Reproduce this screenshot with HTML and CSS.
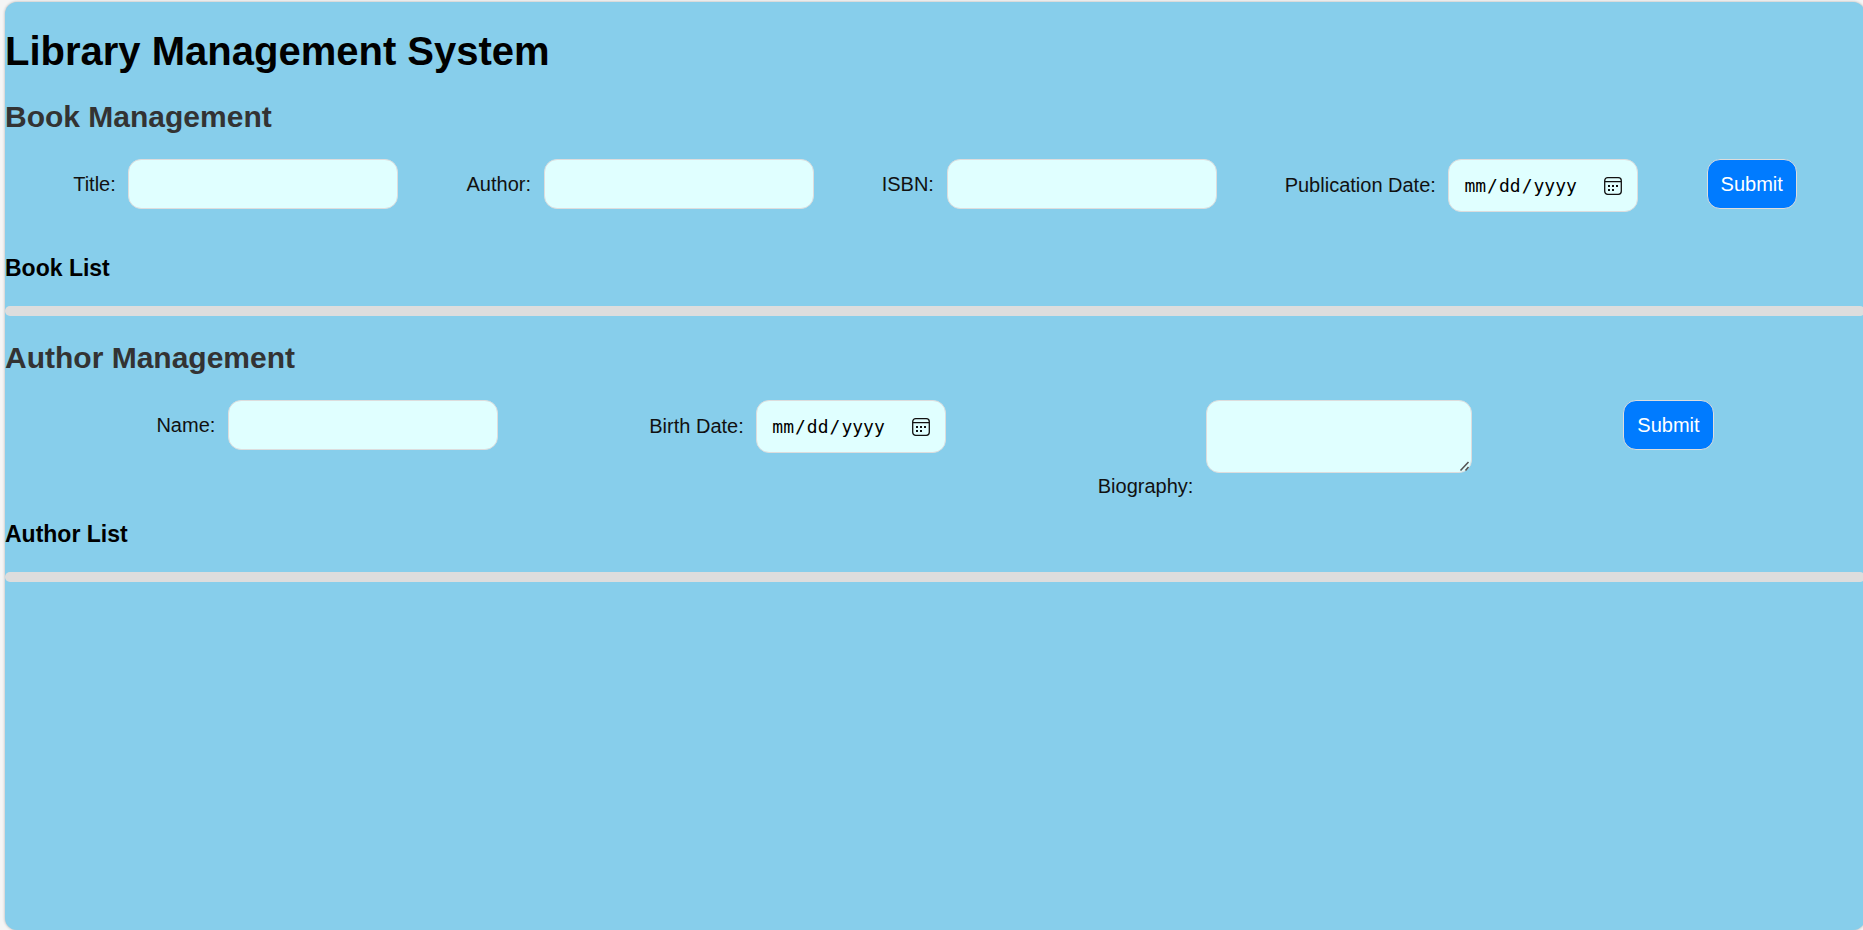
FILE: index.html
```html
<!DOCTYPE html>
<html lang="en">
<head>
<meta charset="utf-8">
<title>Library Management System</title>
<link rel="stylesheet" href="styles.css">
</head>
<body>
<main class="card">
  <h1>Library Management System</h1>
  <section>
    <h2>Book Management</h2>
    <form class="entry-form">
      <div class="field"><label for="title">Title:</label> <input class="control" type="text" id="title"></div>
      <div class="field"><label for="author">Author:</label> <input class="control" type="text" id="author"></div>
      <div class="field"><label for="isbn">ISBN:</label> <input class="control" type="text" id="isbn"></div>
      <div class="field"><label for="published">Publication Date:</label> <input class="control date" type="date" id="published"></div>
      <button class="submit" type="submit">Submit</button>
    </form>
    <h3>Book List</h3>
    <hr class="divider">
  </section>
  <section>
    <h2>Author Management</h2>
    <form class="entry-form">
      <div class="field"><label for="name">Name:</label> <input class="control" type="text" id="name"></div>
      <div class="field"><label for="birth">Birth Date:</label> <input class="control date" type="date" id="birth"></div>
      <div class="field"><label for="biography">Biography:</label> <textarea class="control biography" id="biography"></textarea></div>
      <button class="submit" type="submit">Submit</button>
    </form>
    <h3>Author List</h3>
    <hr class="divider">
  </section>
</main>
</body>
</html>
```
FILE: styles.css
```css
* {
  box-sizing: border-box;
}

body {
  margin: 0;
  background: #f5f5f5;
  font-family: "Liberation Sans", Arial, sans-serif;
  font-size: 20px;
  color: #000;
  overflow: hidden;
}

.card {
  display: flow-root;
  margin: 2px -2px 0 5px;
  min-height: calc(100vh - 2px);
  background: skyblue;
  border-radius: 12px;
  box-shadow: 0 0 3px rgba(0, 0, 0, 0.3);
}

h1 {
  margin: 26px 0;
  font-size: 40px;
  line-height: 46px;
}

h2 {
  margin: 25px 0;
  font-size: 30px;
  line-height: 34px;
  color: #333;
}

h3 {
  margin: 23px 0 24px;
  font-size: 23px;
  line-height: 27px;
}

.entry-form {
  display: flex;
  justify-content: space-evenly;
  align-items: flex-start;
}

.field {
  color: #111;
}

.control {
  width: 270px;
  height: 50px;
  margin: 0 0 20px 7px;
  padding: 12px;
  border: 1px solid #ddd;
  border-radius: 13px;
  background: lightcyan;
  font: inherit;
  color: #000;
}

.date {
  width: 190px;
  height: 53px;
  padding: 12px 14px;
  font-family: "DejaVu Sans Mono", monospace;
  font-size: 18px;
}

.date::-webkit-calendar-picker-indicator {
  width: 20px;
  height: 20px;
  padding: 0;
  background: url("data:image/svg+xml,%3Csvg xmlns='http://www.w3.org/2000/svg' viewBox='0 0 20 20'%3E%3Crect x='1.7' y='1.7' width='16.6' height='16.6' rx='3' fill='none' stroke='%23111' stroke-width='1.3'/%3E%3Cpath d='M2 5.7h16' stroke='%23111' stroke-width='1.3'/%3E%3Cg fill='%23111'%3E%3Crect x='5' y='9' width='2' height='2'/%3E%3Crect x='9' y='9' width='2' height='2'/%3E%3Crect x='13' y='9' width='2' height='2'/%3E%3Crect x='5' y='13' width='2' height='2'/%3E%3Crect x='9' y='13' width='2' height='2'/%3E%3C/g%3E%3C/svg%3E") center / 20px 20px no-repeat;
}

.biography {
  width: 266px;
  height: 73px;
}

.biography::-webkit-resizer {
  background: url("data:image/svg+xml,%3Csvg xmlns='http://www.w3.org/2000/svg' width='15' height='15'%3E%3Cpath d='M4.5 13.5l8-8.5M9.5 13.5l3-3.5' stroke='%23555' stroke-width='1.6'/%3E%3C/svg%3E") no-repeat;
}

.submit {
  height: 50px;
  padding: 0 13px;
  border: 1px solid #ddd;
  border-radius: 13px;
  background: #007bff;
  font: inherit;
  color: #fff;
}

.divider {
  height: 10px;
  margin: 0;
  border: 0;
  border-radius: 5px;
  background: #ddd;
}
```
